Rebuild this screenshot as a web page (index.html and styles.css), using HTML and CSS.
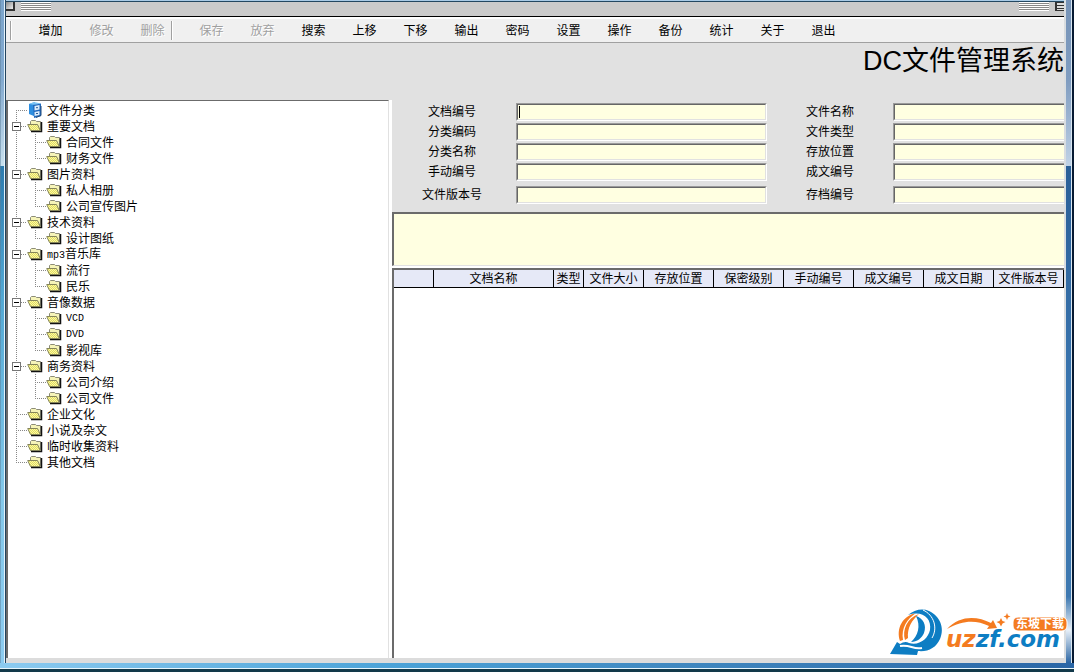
FILE: index.html
```html
<!DOCTYPE html>
<html lang="zh-CN">
<head>
<meta charset="utf-8">
<title>DC文件管理系统</title>
<link rel="stylesheet" href="styles.css">
</head>
<body>
<svg class="defs" aria-hidden="true">
  <defs>
    <pattern id="weave" width="2" height="2" patternUnits="userSpaceOnUse">
      <rect width="2" height="2" fill="#fbf9a4"/>
      <rect width="1" height="1" fill="#e2dc60"/>
      <rect x="1" y="1" width="1" height="1" fill="#e2dc60"/>
    </pattern>
    <symbol id="folder" viewBox="0 0 16 14">
      <path d="M3.500 11V2.500L4.500 1.500H8.500L9.500 2.500H13.500V11z" fill="#f6f4b8" stroke="#8c8c78"/>
      <path d="M14.500 3V12.500H4" fill="none" stroke="#111" stroke-width="1.500"/>
      <path d="M.7 5.500H10.500L13.300 11.500H3.500z" fill="url(#weave)" stroke="#85855a"/>
    </symbol>
  </defs>
</svg>
<div class="window">
  <div class="edge-left"></div>
  <main class="app">
    <header class="titlebar"><span class="box"></span><span class="stripes"></span><span class="fill"></span><span class="stripes"></span><span class="box lined"></span></header>
    <nav class="toolbar" aria-label="工具栏">
      <span class="grip"></span>
      <button>增加</button><button disabled>修改</button><button disabled>删除</button>
      <span class="divider"></span>
      <button disabled>保存</button><button disabled>放弃</button><button>搜索</button><button>上移</button><button>下移</button><button>输出</button><button>密码</button><button>设置</button><button>操作</button><button>备份</button><button>统计</button><button>关于</button><button>退出</button>
    </nav>
    <div class="banner"><h1>DC文件管理系统</h1></div>
    <div class="workspace">
      <aside class="tree">
        <ul class="level1">
          <li><div class="row"><span class="line"></span><svg class="icon root" viewBox="0 0 16 16"><path d="M2 2L8 0V14.500L2 12z" fill="#2d8ee0"/><path d="M2 2L7 0 14 1.500 8 3z" fill="#7cc4f4"/><path d="M6 3L14 1.500V14L7 16z" fill="#2169bd"/><path d="M7.500 4L12.500 3V7.500L7.500 8.500zM7.500 10L12.500 9V13L7.500 14z" fill="#dcecfa"/><path d="M9 5.700H11M9 11.500H11" stroke="#2a5c98"/><path d="M14 4V13.500L9 15.500" fill="none" stroke="#234a78"/></svg><span>文件分类</span></div></li>
          <li><div class="row"><button class="toggle" aria-label="折叠"></button><span class="line"></span><svg class="icon"><use href="#folder"/></svg><span>重要文档</span></div>
            <ul class="level2">
              <li class="row"><span class="line"></span><svg class="icon"><use href="#folder"/></svg><span>合同文件</span></li>
              <li class="row"><span class="line"></span><svg class="icon"><use href="#folder"/></svg><span>财务文件</span></li>
            </ul></li>
          <li><div class="row"><button class="toggle" aria-label="折叠"></button><span class="line"></span><svg class="icon"><use href="#folder"/></svg><span>图片资料</span></div>
            <ul class="level2">
              <li class="row"><span class="line"></span><svg class="icon"><use href="#folder"/></svg><span>私人相册</span></li>
              <li class="row"><span class="line"></span><svg class="icon"><use href="#folder"/></svg><span>公司宣传图片</span></li>
            </ul></li>
          <li><div class="row"><button class="toggle" aria-label="折叠"></button><span class="line"></span><svg class="icon"><use href="#folder"/></svg><span>技术资料</span></div>
            <ul class="level2">
              <li class="row"><span class="line"></span><svg class="icon"><use href="#folder"/></svg><span>设计图纸</span></li>
            </ul></li>
          <li><div class="row"><button class="toggle" aria-label="折叠"></button><span class="line"></span><svg class="icon"><use href="#folder"/></svg><span><span class="latin">mp3</span>音乐库</span></div>
            <ul class="level2">
              <li class="row"><span class="line"></span><svg class="icon"><use href="#folder"/></svg><span>流行</span></li>
              <li class="row"><span class="line"></span><svg class="icon"><use href="#folder"/></svg><span>民乐</span></li>
            </ul></li>
          <li><div class="row"><button class="toggle" aria-label="折叠"></button><span class="line"></span><svg class="icon"><use href="#folder"/></svg><span>音像数据</span></div>
            <ul class="level2">
              <li class="row"><span class="line"></span><svg class="icon"><use href="#folder"/></svg><span class="latin">VCD</span></li>
              <li class="row"><span class="line"></span><svg class="icon"><use href="#folder"/></svg><span class="latin">DVD</span></li>
              <li class="row"><span class="line"></span><svg class="icon"><use href="#folder"/></svg><span>影视库</span></li>
            </ul></li>
          <li><div class="row"><button class="toggle" aria-label="折叠"></button><span class="line"></span><svg class="icon"><use href="#folder"/></svg><span>商务资料</span></div>
            <ul class="level2">
              <li class="row"><span class="line"></span><svg class="icon"><use href="#folder"/></svg><span>公司介绍</span></li>
              <li class="row"><span class="line"></span><svg class="icon"><use href="#folder"/></svg><span>公司文件</span></li>
            </ul></li>
          <li><div class="row"><span class="line"></span><svg class="icon"><use href="#folder"/></svg><span>企业文化</span></div></li>
          <li><div class="row"><span class="line"></span><svg class="icon"><use href="#folder"/></svg><span>小说及杂文</span></div></li>
          <li><div class="row"><span class="line"></span><svg class="icon"><use href="#folder"/></svg><span>临时收集资料</span></div></li>
          <li><div class="row"><span class="line"></span><svg class="icon"><use href="#folder"/></svg><span>其他文档</span></div></li>
        </ul>
      </aside>
      <section class="detail">
        <form class="fields">
          <label for="f1">文档编号</label><div class="field focused"><input id="f1" type="text"></div>
          <label for="f2">文件名称</label><div class="field cut"><input id="f2" type="text"></div>
          <label for="f3">分类编码</label><div class="field"><input id="f3" type="text"></div>
          <label for="f4">文件类型</label><div class="field cut"><input id="f4" type="text"></div>
          <label for="f5">分类名称</label><div class="field"><input id="f5" type="text"></div>
          <label for="f6">存放位置</label><div class="field cut"><input id="f6" type="text"></div>
          <label for="f7">手动编号</label><div class="field"><input id="f7" type="text"></div>
          <label for="f8">成文编号</label><div class="field cut"><input id="f8" type="text"></div>
          <label for="f9">文件版本号</label><div class="field"><input id="f9" type="text"></div>
          <label for="f10">存档编号</label><div class="field cut"><input id="f10" type="text"></div>
        </form>
        <textarea class="notes" aria-label="备注"></textarea>
        <div class="grid">
          <table>
            <colgroup><col class="c-mark"><col class="c-name"><col class="c-type"><col class="c-size"><col><col><col><col><col><col></colgroup>
            <thead><tr><th></th><th>文档名称</th><th>类型</th><th>文件大小</th><th>存放位置</th><th>保密级别</th><th>手动编号</th><th>成文编号</th><th>成文日期</th><th>文件版本号</th></tr></thead>
          </table>
        </div>
      </section>
    </div>
    <footer class="status"></footer>
  </main>
  <div class="edge-right"></div>
  <div class="edge-bottom"></div>
  <svg class="logo" viewBox="0 0 184 56" role="img" aria-label="东坡下载 uzzf.com">
    <path d="M14 37C10 25 16 12 30 9 21 15 15 24 17 36z" fill="#f47b20"/>
    <path d="M19 36C16 26 21 14 33 10 26 16 21 24 22 34z" fill="#f47b20"/>
    <path d="M22 11C28 6 36 4 43 7 54 12 59 24 54 35 50 44 42 48 32 47L31 51 4 50 11 38 14 40C17 38 20 37 23 39 33 42 42 35 44 26 46 14 36 6 22 11z" fill="#0d7dc3"/>
    <path d="M30 12C37 14 41 21 38 29 36 34 31 38 25 38 32 32 35 22 30 12z" fill="#0d7dc3"/>
    <path d="M37 6C48 11 52 24 46 34" fill="none" stroke="#fff"/>
    <path d="M14 42C24 40 27 46 36 44" fill="none" stroke="#fff" stroke-width="2"/>
    <path d="M61 25C74 11 91 12 105 19L107 16 111 24 101 25 103 22C90 16 77 16 61 25z" fill="#f47b20"/>
    <path d="M115 14L116.500 17 119.500 18 116.500 19.500 115 22.500 113.500 19.500 110.500 18 113.500 17zM121 9L122 11.500 124.500 12.500 122 13.500 121 16 120 13.500 117.500 12.500 120 11.500z" fill="#f47b20"/>
    <text class="brand" x="60" y="43"><tspan class="orange">uz</tspan><tspan class="blue">zf.com</tspan></text>
    <rect x="127" y="13" width="54" height="14" rx="5" fill="#f47b20" stroke="#fff"/>
    <text class="badge" x="130" y="24">东坡下载</text>
  </svg>
</div>
</body>
</html>
```
FILE: styles.css
```css
* { box-sizing: border-box; }
body {
  margin: 0;
  font: 12px/18px "Liberation Sans", "Noto Sans CJK SC", sans-serif;
  color: #000;
}
.defs { position: absolute; width: 0; height: 0; }
.window {
  position: relative;
  display: grid;
  grid-template-columns: 6px minmax(0, 1fr) 10px;
  grid-template-rows: 1fr 9px;
  min-height: 100vh;
}
.edge-left {
  background:
    linear-gradient(to right, #5b7f9b80 0 1px, transparent 1px 4px, #e4f2fb 4px 5px, #22435e 5px),
    linear-gradient(#7ba4cb 0, #82a9cf 80px, #c8e0ee 166px, #2d7bae 166px, #52a8d4 45%, #83c8ea 75%, #8ccbf0);
}
.edge-right {
  background:
    linear-gradient(to right, #d9dde0 0 2px, transparent 2px 7px, #dbe8f2 7px 8px, #071a33 8px),
    linear-gradient(#7794b8 0, #7f9cc0 80px, #c0d2e6 166px, #2a5f98 166px, #3a76b0 60%, #3d78b0 90%, #e8f0f8 95%, #2b66a4);
}
.edge-bottom {
  grid-column: 1 / -1;
  background:
    linear-gradient(transparent 0 5px, #e8f6fc 5px 6px, #12394a 6px),
    linear-gradient(to right, #8ccbf0, #4ba3d8 36%, #3f86be 65%, #2a66a6);
}
.app {
  display: flex;
  flex-direction: column;
  border-top: 1px solid #a9cbe6;
  background: #e1e1e1;
}
.titlebar {
  display: flex;
  align-items: flex-start;
  gap: 6px;
  height: 16px;
  border-top: 1px solid #244861;
  border-bottom: 1px solid #000;
  background: #cbcbcb;
}
.box {
  width: 9px;
  height: 9px;
  border: solid #333;
  border-width: 0 2px 2px 0;
  background: linear-gradient(135deg, #888, #eee);
}
.box.lined {
  border-width: 0 0 1px 2px;
  background: repeating-linear-gradient(#333 0 1px, #ddd 1px 3px);
}
.stripes {
  width: 30px;
  height: 9px;
  background: repeating-linear-gradient(#fff 0 1px, #888 1px 2px);
}
.fill { flex: 1; }
.toolbar {
  display: flex;
  align-items: center;
  height: 26px;
  padding-left: 4px;
  background: #f0f0f0;
  border-top: 2px solid #fff;
  border-bottom: 1px solid #a0a0a0;
}
.toolbar button {
  width: 51px;
  padding: 1px 0 0;
  border: 0;
  background: none;
  font: inherit;
  color: #000;
}
.toolbar button:disabled { color: #a0a0a0; text-shadow: 1px 1px #fff; }
.grip, .divider {
  height: 19px;
  border-left: 1px solid #a0a0a0;
  border-right: 1px solid #fff;
}
.grip { width: 2px; margin-right: 13px; }
.divider { width: 2px; margin-left: -7px; margin-right: 13px; }
.banner {
  height: 57px;
  overflow: hidden;
}
h1 {
  margin: 0;
  font-size: 27px;
  font-weight: 400;
  line-height: 36px;
  text-align: right;
}
.workspace {
  flex: 1;
  display: grid;
  grid-template-columns: 384px minmax(0, 1fr);
  gap: 2px;
  background: #fff;
}
.tree {
  border: solid #6b6b6b;
  border-width: 1px 1px 0 2px;
  border-right-color: #e1e1e1;
  background: #fff;
  margin-right: 1px;
  padding: 1px 0 0 4px;
}
ul { margin: 0; padding: 0; list-style: none; }
.level1 > li, .level2 > li {
  background: repeating-linear-gradient(#888 0 1px, transparent 1px 2px) 4px 0 / 1px 100% no-repeat;
}
.level1 > li:first-child { background-position: 4px 8px; }
.level1 > li:last-child, .level2 > li:last-child { background-size: 1px 9px; }
.level2 { padding-left: 19px; }
.row {
  display: flex;
  align-items: center;
  height: 16px;
  padding-left: 4px;
  white-space: nowrap;
}
.line {
  width: 11px;
  height: 1px;
  background: repeating-linear-gradient(to right, #888 0 1px, transparent 1px 2px);
}
.toggle {
  width: 9px;
  height: 9px;
  margin-left: -4px;
  padding: 0;
  border: 1px solid #777;
  background: linear-gradient(#000, #000) center / 5px 1px no-repeat #fff;
}
.toggle + .line { width: 6px; }
.icon { width: 16px; height: 14px; flex: none; }
.icon.root { height: 16px; }
.icon + span { margin-left: 4px; padding-top: 1px; }
.latin { font-family: "Liberation Mono", monospace; font-size: 10px; }
.detail {
  display: flex;
  flex-direction: column;
  min-width: 0;
}
.fields {
  display: grid;
  grid-template-columns: 120px 251fr 118px 171fr;
  grid-template-rows: repeat(3, 18px) 21px 18px;
  gap: 2px 4px;
  padding: 3px 0 8px;
  background: #e1e1e1;
}
.fields label { text-align: center; }
.field {
  display: flex;
  height: 18px;
  border: 1px solid #9a9a9a;
  border-right-color: #fff;
  border-bottom-color: #fff;
}
.field.cut { border-right: 0; }
.field input {
  flex: 1;
  min-width: 0;
  padding: 0 2px;
  border: 1px solid #666;
  border-right-color: #e1e1e1;
  border-bottom-color: #e1e1e1;
  border-radius: 0;
  background: #ffffe1;
  font: inherit;
  outline: 0;
}
.field.cut input { border-right: 0; }
.field.focused input {
  background: linear-gradient(#000, #000) 1px 1px / 1px 12px no-repeat #ffffe1;
}
.notes {
  display: block;
  width: 100%;
  height: 54px;
  border: solid #6b6b6b;
  border-width: 2px 0 1px 2px;
  border-bottom-color: #e1e1e1;
  border-radius: 0;
  background: #ffffe1;
  resize: none;
  outline: 0;
  font: inherit;
}
.grid {
  flex: 1;
  margin-top: 2px;
  border: solid #6b6b6b;
  border-width: 2px 0 0 2px;
}
table {
  width: 100%;
  table-layout: fixed;
  border-collapse: separate;
  border-spacing: 0;
}
.c-mark { width: 40px; }
.c-name { width: 120px; }
.c-type { width: 30px; }
.c-size { width: 60px; }
th {
  height: 18px;
  padding: 1px 0 0;
  border: solid #000;
  border-width: 0 1px 1px 0;
  background: #e6e9f7;
  font-weight: 400;
  line-height: 16px;
  white-space: nowrap;
}
.status { height: 5px; background: #dcdcdc; }
.logo {
  position: absolute;
  right: 4px;
  bottom: 12px;
  width: 184px;
  height: 56px;
}
.brand { font: italic 700 23px "DejaVu Sans", sans-serif; }
.orange { fill: #f47b20; }
.blue { fill: #0d7dc3; }
.badge { font: 700 12px "Noto Sans CJK SC", sans-serif; fill: #fff; }
```
